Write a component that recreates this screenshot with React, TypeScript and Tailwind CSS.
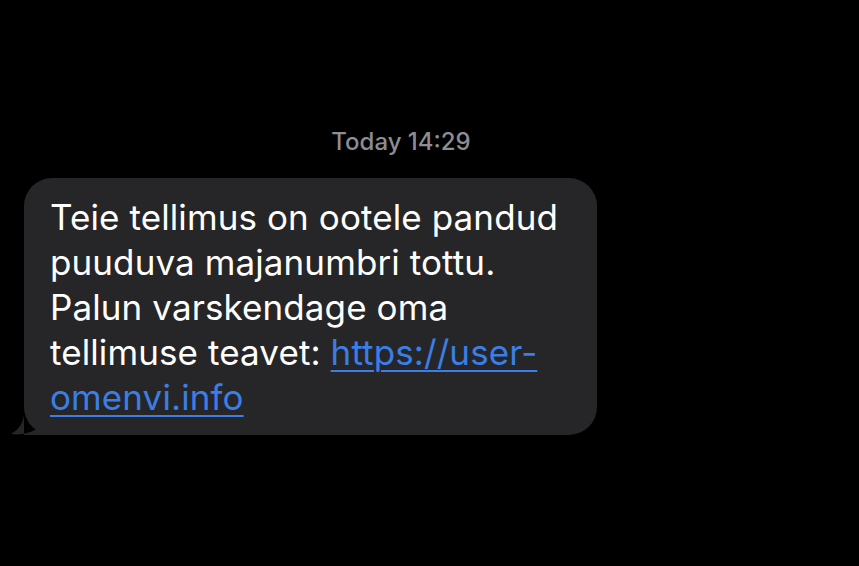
const App = () => {
  return (
    <div className="w-[859px] h-[566px] bg-black overflow-hidden flex flex-col font-['Inter',sans-serif]">
      <div className="pt-[127px] text-center text-[24px] leading-[30px] font-medium text-[#8d8d93] pr-[57px]">
        Today 14:29
      </div>
      <div className="pl-[24px] pt-[21px]">
        <div className="relative w-[573px] h-[257px] bg-[#262628] rounded-[28px] pl-[26px] pt-[17px] text-[35px] leading-[45px] tracking-[0.1px] text-white">
          <svg
            className="absolute left-[-13px] bottom-0"
            width="50"
            height="44"
            viewBox="0 0 50 44"
          >
            <path
              d="M13 0 L13 22 C13 32 7 39 0 43 C10 44.5 21 42 28 36 C34 41 42 44 50 44 L13 44 Z"
              fill="#262628"
            />
          </svg>
          <p className="relative">
            Teie tellimus on ootele pandud
            <br />
            puuduva majanumbri tottu.
            <br />
            Palun varskendage oma
            <br />
            tellimuse teavet:{" "}
            <span className="text-[#3a7ee6] underline decoration-[2px] underline-offset-[5px]">
              https://user-
              <br />
              omenvi.info
            </span>
          </p>
        </div>
      </div>
    </div>
  );
};

export default App;
